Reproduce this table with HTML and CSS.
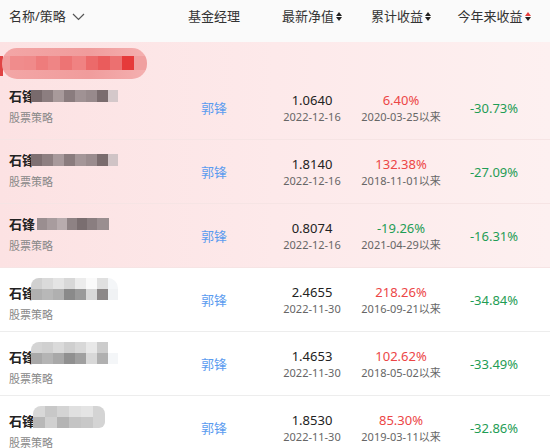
FILE: index.html
```html
<!DOCTYPE html>
<html lang="zh-CN">
<head>
  <meta charset="UTF-8">
  <meta name="viewport" content="width=device-width, initial-scale=1.0">
  <title>基金列表</title>
  <link rel="stylesheet" href="styles.css">
</head>
<body>
  <div class="table">
    <div class="thead">
      <div class="th th-name">名称/策略
        <svg class="chev" width="13" height="8" viewBox="0 0 13 8"><path d="M1 1 L6.5 6.5 L12 1" fill="none" stroke="#555" stroke-width="1.2"/></svg>
      </div>
      <div class="th">基金经理</div>
      <div class="th">最新净值<span class="sort"><i class="up"></i><i class="down"></i></span></div>
      <div class="th">累计收益<span class="sort"><i class="up"></i><i class="down"></i></span></div>
      <div class="th">今年来收益<span class="sort"><i class="up active"></i><i class="down"></i></span></div>
    </div>

    <div class="pinned">
      <div class="group"><span class="smear"></span></div>

      <div class="row">
        <div class="name"><div class="title">石锋<span class="mosaic m1"></span></div><div class="sub">股票策略</div></div>
        <div class="cell manager">郭锋</div>
        <div class="cell"><div class="val">1.0640</div><div class="date">2022-12-16</div></div>
        <div class="cell"><div class="val red">6.40%</div><div class="date">2020-03-25以来</div></div>
        <div class="cell"><div class="val green">-30.73%</div></div>
      </div>

      <div class="row">
        <div class="name"><div class="title">石锋<span class="mosaic m2"></span></div><div class="sub">股票策略</div></div>
        <div class="cell manager">郭锋</div>
        <div class="cell"><div class="val">1.8140</div><div class="date">2022-12-16</div></div>
        <div class="cell"><div class="val red">132.38%</div><div class="date">2018-11-01以来</div></div>
        <div class="cell"><div class="val green">-27.09%</div></div>
      </div>

      <div class="row">
        <div class="name"><div class="title">石锋<span class="mosaic m3"></span></div><div class="sub">股票策略</div></div>
        <div class="cell manager">郭锋</div>
        <div class="cell"><div class="val">0.8074</div><div class="date">2022-12-16</div></div>
        <div class="cell"><div class="val green">-19.26%</div><div class="date">2021-04-29以来</div></div>
        <div class="cell"><div class="val green">-16.31%</div></div>
      </div>
    </div>

    <div class="row">
      <div class="name"><div class="title">石锋<span class="mosaic tall m4"></span></div><div class="sub">股票策略</div></div>
      <div class="cell manager">郭锋</div>
      <div class="cell"><div class="val">2.4655</div><div class="date">2022-11-30</div></div>
      <div class="cell"><div class="val red">218.26%</div><div class="date">2016-09-21以来</div></div>
      <div class="cell"><div class="val green">-34.84%</div></div>
    </div>

    <div class="row">
      <div class="name"><div class="title">石锋<span class="mosaic tall m5"></span></div><div class="sub">股票策略</div></div>
      <div class="cell manager">郭锋</div>
      <div class="cell"><div class="val">1.4653</div><div class="date">2022-11-30</div></div>
      <div class="cell"><div class="val red">102.62%</div><div class="date">2018-05-02以来</div></div>
      <div class="cell"><div class="val green">-33.49%</div></div>
    </div>

    <div class="row">
      <div class="name"><div class="title">石锋<span class="mosaic tall short m6"></span></div><div class="sub">股票策略</div></div>
      <div class="cell manager">郭锋</div>
      <div class="cell"><div class="val">1.8530</div><div class="date">2022-11-30</div></div>
      <div class="cell"><div class="val red">85.30%</div><div class="date">2019-03-11以来</div></div>
      <div class="cell"><div class="val green">-32.86%</div></div>
    </div>
  </div>
</body>
</html>
```

FILE: styles.css
```css
body {
  margin: 0;
  font-family: "Noto Sans", "Noto Sans CJK SC", sans-serif;
  color: #222;
  background: #fff;
  overflow: hidden;
}
.thead,
.row {
  display: grid;
  grid-template-columns: 166px 96px 100px 78px 108px;
  padding-right: 2px;
}
.thead {
  height: 42px;
  background: #fafafa;
  align-items: start;
  padding-top: 6px;
  box-sizing: border-box;
}
.th {
  font-size: 13px;
  line-height: 20px;
  color: #333;
  display: flex;
  align-items: center;
  justify-content: center;
  white-space: nowrap;
}
.th-name {
  justify-content: flex-start;
  padding-left: 9px;
}
.chev {
  margin-left: 6px;
  margin-top: 1px;
}
.sort {
  display: inline-flex;
  flex-direction: column;
  gap: 1px;
  margin-left: 2px;
}
.sort i {
  width: 0;
  height: 0;
  border-left: 3px solid transparent;
  border-right: 3px solid transparent;
}
.sort .up {
  border-bottom: 4px solid #222;
}
.sort .down {
  border-top: 4px solid #222;
}
.sort .up.active {
  border-bottom-color: #e8403f;
}
.pinned {
  background: linear-gradient(90deg, #fce2e3 0%, #fde9ea 50%, #fdf0f0 100%);
}
.group {
  height: 34px;
  position: relative;
}
.group::before {
  content: "";
  position: absolute;
  left: 0;
  top: 14px;
  width: 3px;
  height: 20px;
  background: #e04444;
}
.smear {
  position: absolute;
  left: 2px;
  top: 6px;
  width: 145px;
  height: 31px;
  border-radius: 15px;
  background:
    linear-gradient(90deg, #f19d9d 0 8px, #f08c8c 8px 22px, #f08a8a 22px 34px, #ee7c7c 34px 46px, #ef8585 46px 58px, #ed7474 58px 70px, #f08282 70px 84px, #ec6a6a 84px 96px, #ea5c5c 96px 108px, #ec7070 108px 120px, #e63a3a 120px 132px, #f0a0a0 132px) 0 8px / 100% 14px no-repeat,
    linear-gradient(90deg, #f3a6a6, #f09c9c 60%, #f4b0b0);
  filter: blur(0.6px);
}
.row {
  height: 64px;
  box-sizing: border-box;
  border-bottom: 1px solid #ededed;
}
.pinned .row {
  border-bottom-color: #f6e4e4;
}
.name {
  padding: 10px 0 0 9px;
}
.title {
  font-size: 13px;
  font-weight: bold;
  line-height: 20px;
  white-space: nowrap;
}
.sub {
  margin-top: 4px;
  font-size: 11px;
  line-height: 16px;
  color: #888;
}
.mosaic {
  display: inline-block;
  width: 87px;
  height: 12px;
  margin-left: -4px;
  vertical-align: -1px;
  filter: blur(0.4px);
}
.mosaic.tall {
  height: 22px;
  vertical-align: -2px;
  border-radius: 8px 10px 0 0;
}
.mosaic.short {
  width: 72px;
  margin-left: -2px;
  border-radius: 8px 8px 6px 0;
}
.m1 {
  background: linear-gradient(90deg, #786a6c 0 11px, #8c7e80 11px 22px, #a89a9b 22px 33px, #8a7c7e 33px 44px, #a09294 44px 55px, #988a8c 55px 66px, #7a6c6e 66px 77px, #d4c8ca 77px);
}
.m2 {
  background: linear-gradient(90deg, #7e7072 0 11px, #8e8082 11px 22px, #a89a9c 22px 33px, #8a7c7e 33px 44px, #a49698 44px 55px, #9a8c8e 55px 66px, #7a6c6e 66px 77px, #d0c4c6 77px);
}
.m3 {
  width: 72px;
  margin-left: 2px;
  background: linear-gradient(90deg, #9a8e90 0 10px, #a89c9e 10px 20px, #b8acae 20px 30px, #8e8284 30px 40px, #7a6e70 40px 50px, #8a7e80 50px 60px, #9a8e90 60px);
}
.m4 {
  background:
    linear-gradient(90deg, #d0d0d0 0 11px, #dadada 11px 22px, #e4e4e4 22px 33px, #d8d8d8 33px 44px, #ececec 44px 55px, #fafafa 55px 66px, #e0e0e0 66px 77px, #f4f6f8 77px) 0 0 / 100% 11px no-repeat,
    linear-gradient(90deg, #b0b0b0 0 11px, #b8b8b8 11px 22px, #b0b0b0 22px 33px, #8a8a8a 33px 44px, #9a9a9a 44px 55px, #d8d8d8 55px 66px, #8c8888 66px 77px, #f0f2f4 77px) 0 11px / 100% 11px no-repeat;
}
.m5 {
  background:
    linear-gradient(90deg, #d4d4d4 0 11px, #d0d0d0 11px 22px, #dadada 22px 33px, #cfcfcf 33px 44px, #d8d8d8 44px 55px, #e8e8e8 55px 66px, #cccccc 66px 77px, #ffffff 77px) 0 0 / 100% 11px no-repeat,
    linear-gradient(90deg, #a8a8a8 0 11px, #b4b4b4 11px 22px, #a8a8a8 22px 33px, #909090 33px 44px, #a0a0a0 44px 55px, #d8d8d8 55px 66px, #b0b0b0 66px 77px, #f4f6f8 77px) 0 11px / 100% 11px no-repeat;
}
.m6 {
  background:
    linear-gradient(90deg, #d8d8d8 0 12px, #c8c8c8 12px 24px, #d4d4d4 24px 36px, #e0e0e0 36px 48px, #e4e4e4 48px 60px, #d4d4d4 60px) 0 0 / 100% 11px no-repeat,
    linear-gradient(90deg, #b8b8b8 0 12px, #d0d0d0 12px 24px, #b4b4b4 24px 36px, #c4c4c4 36px 48px, #c8c8c8 48px 60px, #d4d4d4 60px) 0 11px / 100% 11px no-repeat;
}
.cell {
  display: flex;
  flex-direction: column;
  align-items: center;
  justify-content: center;
  white-space: nowrap;
}
.manager {
  font-size: 13px;
  color: #5a9bef;
}
.val {
  font-size: 13px;
  line-height: 18px;
  color: #222;
}
.date {
  font-size: 11px;
  line-height: 16px;
  color: #666;
}
.red {
  color: #ec4646;
}
.green {
  color: #1f9d55;
}
```
